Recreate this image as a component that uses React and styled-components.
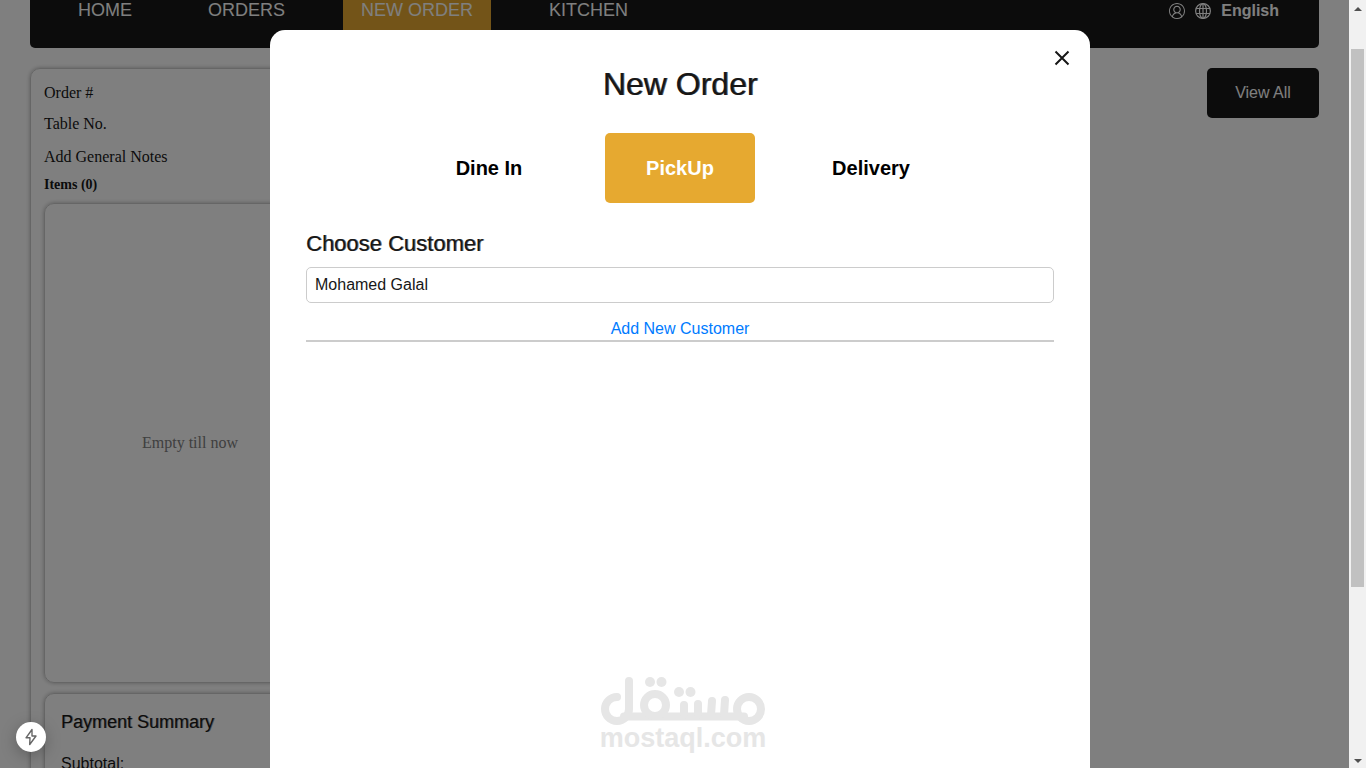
import React from "react";
import styled, { createGlobalStyle } from "styled-components";
import { VscAccount } from "react-icons/vsc";

const GlobalStyle = createGlobalStyle`
  * {
    box-sizing: border-box;
  }
  body {
    margin: 0;
    overflow: hidden;
    background: #fff;
    color: #171717;
    font-family: "Liberation Sans", Arial, sans-serif;
  }
  button, input {
    font-family: inherit;
  }
  h1, h2, h3, p {
    margin: 0;
  }
`;

const Shell = styled.div`
  display: flex;
  height: 100vh;
`;

const Page = styled.div`
  position: relative;
  flex: 1;
  overflow: hidden;
  padding: 0 30px;
`;

const TopBar = styled.header`
  display: flex;
  justify-content: space-between;
  padding: 0 40px 0 30px;
  background: #181818;
  border-radius: 0 0 5px 5px;
`;

const Nav = styled.nav`
  display: flex;
  gap: 40px;
`;

const NavLink = styled.a`
  padding: 0 18px 28px;
  background: ${(props) => (props.$active ? "#e6a930" : "transparent")};
  color: #fff;
  font-size: 18px;
  line-height: 20px;
  text-decoration: none;
`;

const Tools = styled.div`
  display: flex;
  align-items: center;
  gap: 10px;
  height: 22px;
  color: #fff;
  font-size: 16px;
`;

const LanguageButton = styled.button`
  padding: 0;
  border: 0;
  background: none;
  color: #fff;
  font-size: 16px;
  font-weight: bold;
  line-height: 20px;
`;

const Columns = styled.main`
  display: flex;
  justify-content: space-between;
  align-items: flex-start;
  padding-top: 20px;
`;

const Box = styled.section`
  border: 1px solid #ccc;
  border-radius: 10px;
  box-shadow: 0 0 4px rgba(0, 0, 0, 0.3);
`;

const OrderPanel = styled(Box)`
  width: 320px;
  padding: 12px 13px;
  font-family: "Liberation Serif", "Times New Roman", serif;
  font-size: 16px;
`;

const Line = styled.p`
  margin-bottom: ${(props) => props.$gap}px;
  line-height: 24px;
  font-size: ${(props) => (props.$strong ? 14 : 16)}px;
  font-weight: ${(props) => (props.$strong ? "bold" : "normal")};
`;

const ItemsBox = styled(Box)`
  display: flex;
  align-items: center;
  justify-content: center;
  height: 480px;
  margin-bottom: 10px;
  color: #808080;
`;

const Summary = styled(Box)`
  padding: 16px;
  font-family: "Liberation Sans", Arial, sans-serif;
`;

const SummaryTitle = styled.h3`
  margin-bottom: 20px;
  font-size: 18px;
  font-weight: normal;
  line-height: 24px;
  text-shadow: 1px 0 rgba(23, 23, 23, 0.4);
`;

const SummaryRow = styled.p`
  font-size: 16px;
  line-height: 20px;
`;

const ViewAll = styled.button`
  width: 112px;
  height: 50px;
  border: 0;
  border-radius: 5px;
  background: #181818;
  color: #fff;
  font-size: 16px;
`;

const Overlay = styled.div`
  position: absolute;
  inset: 0;
  padding: 30px 259px 0 270px;
  background: rgba(0, 0, 0, 0.5);
`;

const Dialog = styled.div`
  position: relative;
  display: flex;
  flex-direction: column;
  height: 100%;
  padding: 34px 36px 18px;
  border-radius: 15px 15px 0 0;
  background: #fff;
`;

const CloseButton = styled.button`
  position: absolute;
  top: 18px;
  right: 18px;
  display: flex;
  padding: 0;
  border: 0;
  background: none;
  color: #171717;
`;

const Title = styled.h1`
  font-size: 32px;
  font-weight: normal;
  line-height: 40px;
  text-align: center;
  text-shadow: 1px 0 rgba(23, 23, 23, 0.7);
`;

const Types = styled.div`
  display: flex;
  justify-content: center;
  gap: 41px;
  margin-top: 29px;
`;

const TypeButton = styled.button`
  width: 150px;
  height: 70px;
  padding: 0;
  border: 0;
  border-radius: 5px;
  background: ${(props) => (props.$active ? "#e6a930" : "transparent")};
  color: ${(props) => (props.$active ? "#fff" : "#000")};
  font-size: 20px;
  font-weight: bold;
`;

const FieldLabel = styled.label`
  margin: 27px 0 10px;
  font-size: 22px;
  line-height: 27px;
  text-shadow: 1px 0 rgba(23, 23, 23, 0.6);
`;

const Field = styled.input`
  width: 100%;
  height: 36px;
  padding: 0 8px;
  border: 1px solid #ccc;
  border-radius: 5px;
  color: #171717;
  font-size: 16px;
  outline: none;
`;

const AddCustomer = styled.button`
  margin-top: 15px;
  padding: 0;
  border: 0;
  border-bottom: 2px solid #ccc;
  background: none;
  color: #007bff;
  font-size: 16px;
  line-height: 22px;
`;

const Brand = styled.div`
  display: flex;
  flex-direction: column;
  align-items: center;
  margin: auto 0 0 6px;
  color: #e6e6e6;
  font-size: 27px;
  font-weight: bold;
  line-height: 24px;
`;

const DevBadge = styled.button`
  position: absolute;
  left: 16px;
  bottom: 16px;
  display: flex;
  align-items: center;
  justify-content: center;
  width: 30px;
  height: 30px;
  padding: 0;
  border: 0;
  border-radius: 50%;
  background: #fff;
  box-shadow: 0 4px 16px rgba(0, 0, 0, 0.25);
`;

const ScrollTrack = styled.div`
  display: flex;
  flex-direction: column;
  align-items: center;
  justify-content: space-between;
  width: 17px;
  padding: 7px 0 5px;
  background: #f1f1f1;
`;

const ScrollThumb = styled.div`
  width: 13px;
  height: 70vh;
  margin: 38px 0 auto;
  background: #c1c1c1;
`;

const Arrow = styled.span`
  border: 4px solid transparent;
  border-${(props) => (props.$down ? "top" : "bottom")}-color: #505050;
  border-${(props) => (props.$down ? "bottom" : "top")}-width: 0;
`;

const Globe = () => (
  <svg width="16" height="16" viewBox="0 0 16 16" fill="none" stroke="currentColor" strokeWidth="1.2">
    <circle cx="8" cy="8" r="7.4" />
    <ellipse cx="8" cy="8" rx="3.5" ry="7.4" />
    <path d="M8 .5v15M1 5.5h14M1 10.5h14" />
  </svg>
);

const Logo = () => (
  <svg width="166" height="50" viewBox="0 0 166 50" fill="none" stroke="currentColor" strokeLinecap="round">
    <path d="M17 21A12 12 0 1 0 29 33V5" strokeWidth="8" />
    <path d="M24 40.5h120" strokeWidth="8" />
    <circle cx="55" cy="29" r="11" strokeWidth="8" />
    <circle cx="149" cy="33" r="12" strokeWidth="8" />
    <path d="M84 29v10M98 28v11M112 25l-1 14M125 24l-1 15" strokeWidth="8" />
    <g fill="currentColor" stroke="none">
      <circle cx="50" cy="6" r="5" />
      <circle cx="61.5" cy="6" r="5" />
      <circle cx="79" cy="16" r="5" />
      <circle cx="90.5" cy="16" r="5" />
    </g>
  </svg>
);

const LINKS = ["HOME", "ORDERS", "NEW ORDER", "KITCHEN"];
const TYPES = ["Dine In", "PickUp", "Delivery"];

const Header = () => (
  <TopBar>
    <Nav>
      {LINKS.map((link) => (
        <NavLink key={link} href="#" $active={link === "NEW ORDER"}>
          {link}
        </NavLink>
      ))}
    </Nav>
    <Tools>
      <VscAccount />
      <Globe />
      <LanguageButton>English</LanguageButton>
    </Tools>
  </TopBar>
);

const Order = () => (
  <OrderPanel>
    <Line $gap={7}>Order #</Line>
    <Line $gap={9}>Table No.</Line>
    <Line $gap={4}>Add General Notes</Line>
    <Line $gap={6} $strong>
      Items (0)
    </Line>
    <ItemsBox>Empty till now</ItemsBox>
    <Summary>
      <SummaryTitle>Payment Summary</SummaryTitle>
      <SummaryRow>Subtotal:</SummaryRow>
    </Summary>
  </OrderPanel>
);

const NewOrder = () => (
  <Overlay>
    <Dialog role="dialog" aria-labelledby="title">
      <CloseButton aria-label="Close">
        <svg width="20" height="20" viewBox="0 0 20 20" stroke="currentColor" strokeWidth="2">
          <path d="M3.5 3.5l13 13M16.5 3.5l-13 13" />
        </svg>
      </CloseButton>
      <Title id="title">New Order</Title>
      <Types>
        {TYPES.map((type) => (
          <TypeButton key={type} $active={type === "PickUp"}>
            {type}
          </TypeButton>
        ))}
      </Types>
      <FieldLabel htmlFor="customer">Choose Customer</FieldLabel>
      <Field id="customer" defaultValue="Mohamed Galal" />
      <AddCustomer>Add New Customer</AddCustomer>
      <Brand>
        <Logo />
        mostaql.com
      </Brand>
    </Dialog>
  </Overlay>
);

const App = () => {
  return (
    <Shell>
      <GlobalStyle />
      <Page>
        <Header />
        <Columns>
          <Order />
          <ViewAll>View All</ViewAll>
        </Columns>
        <NewOrder />
        <DevBadge aria-label="Dev tools">
          <svg width="18" height="18" viewBox="0 0 18 18" fill="none" stroke="#666" strokeWidth="1.4">
            <path d="M10 1.5L4 9.8h4L7.7 16.5 14 8h-4z" strokeLinejoin="round" />
          </svg>
        </DevBadge>
      </Page>
      <ScrollTrack>
        <Arrow />
        <ScrollThumb />
        <Arrow $down />
      </ScrollTrack>
    </Shell>
  );
};

export default App;
